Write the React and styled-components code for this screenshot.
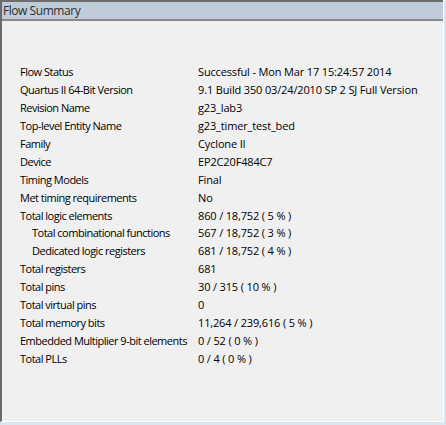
import styled, { createGlobalStyle } from "styled-components";

const GlobalStyle = createGlobalStyle`
  html, body {
    margin: 0;
    padding: 0;
    background: #dce5ee;
  }
`;

const Panel = styled.div`
  width: 444px;
  height: 422px;
  box-sizing: border-box;
  background: #f0f0f0;
  border-left: 2px solid #6a6a6a;
  border-right: 1px solid #ffffff;
  border-bottom: 1px solid #ffffff;
  font-family: "Open Sans", "Segoe UI", sans-serif;
  font-size: 11px;
  letter-spacing: -0.15px;
  color: #000;
  display: flex;
  flex-direction: column;
`;

const Header = styled.div`
  height: 21px;
  box-sizing: border-box;
  background: #bfcddb;
  border-top: 2px solid #6d6d6d;
  border-bottom: 2px solid #8a8a8a;
  padding-left: 1px;
  line-height: 17px;
  font-size: 12px;
  letter-spacing: -0.45px;
  color: #2e2e2e;
  white-space: nowrap;
`;

const Table = styled.div`
  padding-top: 42px;
  padding-left: 18px;
  display: flex;
  flex-direction: column;
`;

const Row = styled.div`
  display: grid;
  grid-template-columns: 178px 1fr;
  height: 17.94px;
  line-height: 18px;
  white-space: nowrap;
`;

const Label = styled.span`
  padding-left: ${(p) => (p.$indent ? "12px" : "0")};
  letter-spacing: -0.5px;
`;

const rows = [
  ["Flow Status", "Successful - Mon Mar 17 15:24:57 2014"],
  ["Quartus II 64-Bit Version", "9.1 Build 350 03/24/2010 SP 2 SJ Full Version"],
  ["Revision Name", "g23_lab3"],
  ["Top-level Entity Name", "g23_timer_test_bed"],
  ["Family", "Cyclone II"],
  ["Device", "EP2C20F484C7"],
  ["Timing Models", "Final"],
  ["Met timing requirements", "No"],
  ["Total logic elements", "860 / 18,752 ( 5 % )"],
  ["Total combinational functions", "567 / 18,752 ( 3 % )", true],
  ["Dedicated logic registers", "681 / 18,752 ( 4 % )", true],
  ["Total registers", "681"],
  ["Total pins", "30 / 315 ( 10 % )"],
  ["Total virtual pins", "0"],
  ["Total memory bits", "11,264 / 239,616 ( 5 % )"],
  ["Embedded Multiplier 9-bit elements", "0 / 52 ( 0 % )"],
  ["Total PLLs", "0 / 4 ( 0 % )"],
];

export default function App() {
  return (
    <>
      <GlobalStyle />
      <Panel>
        <Header>Flow Summary</Header>
        <Table>
          {rows.map(([label, value, indent]) => (
            <Row key={label}>
              <Label $indent={indent}>{label}</Label>
              <span>{value}</span>
            </Row>
          ))}
        </Table>
      </Panel>
    </>
  );
}
